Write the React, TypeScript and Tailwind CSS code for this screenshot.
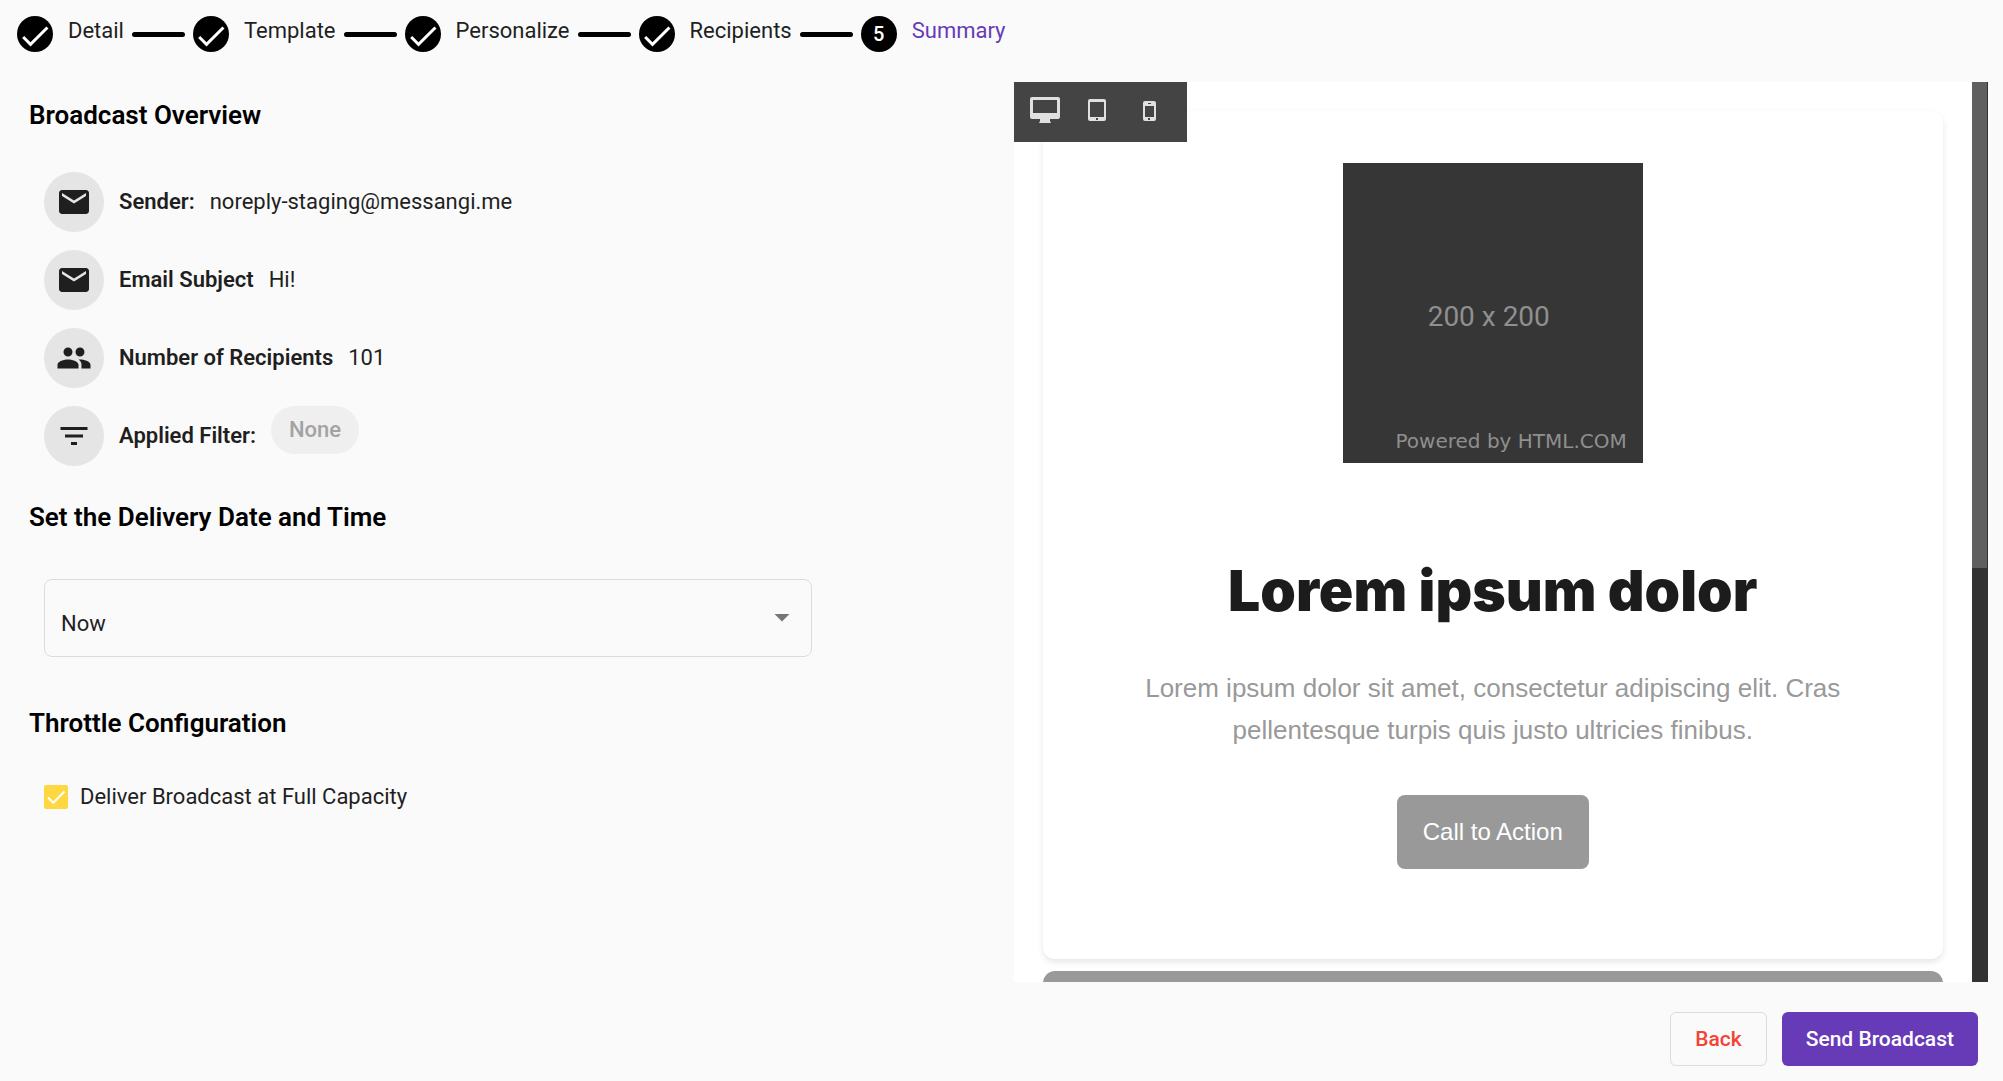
import { MdArrowDropDown, MdCheck, MdEmail, MdFilterList, MdPeople } from "react-icons/md";

const STEPS = ["Detail", "Template", "Personalize", "Recipients", "Summary"];
const CURRENT = 4;

const OVERVIEW = [
  { icon: MdEmail, label: "Sender:", value: "noreply-staging@messangi.me" },
  { icon: MdEmail, label: "Email Subject", value: "Hi!" },
  { icon: MdPeople, label: "Number of Recipients", value: "101" },
  { icon: MdFilterList, label: "Applied Filter:", chip: "None" },
];

function Stepper() {
  return (
    <ol className="flex items-center px-[17px] pt-4">
      {STEPS.map((step, i) => (
        <li key={step} className="flex items-center">
          <span className="flex size-9 items-center justify-center rounded-full bg-black text-xl font-medium text-white">
            {i < CURRENT ? <MdCheck className="mt-1 size-9 shrink-0" /> : i + 1}
          </span>
          <span className={`ml-[15px] pb-1.5 leading-7 ${i === CURRENT ? "text-[#673ab7]" : ""}`}>{step}</span>
          {i < STEPS.length - 1 && <span className="mx-2 h-[5px] w-[53px] rounded-full bg-black" />}
        </li>
      ))}
    </ol>
  );
}

function Overview() {
  return (
    <ul className="mt-[41px] flex flex-col gap-[18px] pl-[15px]">
      {OVERVIEW.map(({ icon: Icon, label, value, chip }) => (
        <li key={label} className="flex items-center gap-[15px]">
          <span className="flex size-[60px] items-center justify-center rounded-full bg-[#e5e5e5]">
            <Icon className="size-9" />
          </span>
          <span className="font-semibold">{label}</span>
          {value && <span>{value}</span>}
          {chip && (
            <span className="flex h-12 items-center self-start rounded-full bg-[#efefef] px-[18px] font-medium text-[#a3a3a3]">
              {chip}
            </span>
          )}
        </li>
      ))}
    </ul>
  );
}

function DeviceBar() {
  return (
    <div className="absolute top-0 left-0 flex h-[60px] w-[173px] bg-[#444] pl-4 text-[#e0e0e0]">
      <button aria-label="Desktop" className="flex w-[58px] items-start pt-[15px]">
        <svg viewBox="0 0 30 26" className="h-[26px] w-[30px]" fill="currentColor">
          <path fillRule="evenodd" d="M2 0h26a2 2 0 0 1 2 2v18a2 2 0 0 1-2 2h-8v2l1 2H9l1-2v-2H2a2 2 0 0 1-2-2V2a2 2 0 0 1 2-2zm1 3v13h24V3z" />
        </svg>
      </button>
      <button aria-label="Tablet" className="flex w-[55px] items-start pt-[17px]">
        <svg viewBox="0 0 18 22" className="h-[22px] w-[18px]" fill="currentColor">
          <path fillRule="evenodd" d="M2 0h14a2 2 0 0 1 2 2v18a2 2 0 0 1-2 2H2a2 2 0 0 1-2-2V2a2 2 0 0 1 2-2zm0 3v15h14V3zm6 16v2h2v-2z" />
        </svg>
      </button>
      <button aria-label="Phone" className="flex items-start pt-[19px]">
        <svg viewBox="0 0 13 20" className="h-5 w-[13px]" fill="currentColor">
          <path fillRule="evenodd" d="M2 0h9a2 2 0 0 1 2 2v16a2 2 0 0 1-2 2H2a2 2 0 0 1-2-2V2a2 2 0 0 1 2-2zm0 5v11h9V5zm3 12v2h2v-2zM5 2v1h3V2z" />
        </svg>
      </button>
    </div>
  );
}

function Preview() {
  return (
    <div className="relative flex overflow-hidden bg-white">
      <div className="flex-1 px-[29px] pt-[29px] font-['Liberation_Sans',Arial,sans-serif]">
        <article className="flex h-[848px] flex-col items-center rounded-xl pt-[52px] shadow-[0_3px_6px_rgba(0,0,0,0.1)]">
          <div className="relative flex size-[300px] items-center justify-center bg-[#363636] pt-2 pr-2 text-[#8f8f8f]">
            <span className="font-['Roboto',sans-serif] text-[28px]">200 x 200</span>
            <span className="absolute right-4 bottom-2 font-['DejaVu_Sans',sans-serif] text-xl leading-7 whitespace-nowrap">
              Powered by HTML.COM
            </span>
          </div>
          <h2 className="mt-[93px] font-['Inter',sans-serif] text-[57px] leading-[70px] font-black text-[#1c1c1c]">
            Lorem ipsum dolor
          </h2>
          <p className="mt-[41px] max-w-[740px] text-center text-[26px] leading-[42px] text-[#999]">
            Lorem ipsum dolor sit amet, consectetur adipiscing elit. Cras pellentesque turpis quis justo ultricies finibus.
          </p>
          <a href="#" className="mt-[44px] rounded-lg bg-[#999] px-[26px] py-[19px] text-2xl leading-9 text-white">
            Call to Action
          </a>
        </article>
        <div className="mt-3 h-40 rounded-xl bg-[#999]" />
      </div>
      <div className="w-4 bg-[#333]">
        <div className="mr-px h-[54%] bg-[#5f5f5f]" />
      </div>
      <DeviceBar />
    </div>
  );
}

export default function App() {
  return (
    <div className="flex h-screen min-h-[900px] flex-col bg-[#fafafa] font-['Roboto',sans-serif] text-[22px] leading-8 text-[#1f1f1f]">
      <Stepper />

      <main className="mt-[30px] grid min-h-0 flex-1 grid-cols-2 grid-rows-1">
        <div className="pt-[17px] pr-3 pl-[29px]">
          <h2 className="text-[26px] leading-8 font-semibold text-black">Broadcast Overview</h2>
          <Overview />

          <h2 id="delivery" className="mt-[35px] text-[26px] leading-8 font-semibold text-black">
            Set the Delivery Date and Time
          </h2>
          <div className="relative mt-[46px] ml-[15px] w-4/5">
            <select
              aria-labelledby="delivery"
              className="h-[78px] w-full appearance-none rounded-lg border border-[#dcdcdc] bg-transparent px-4 pt-3"
            >
              <option>Now</option>
            </select>
            <MdArrowDropDown className="pointer-events-none absolute top-5 right-3 size-9 text-[#757575]" />
          </div>

          <h2 className="mt-[50px] text-[26px] leading-8 font-semibold text-black">Throttle Configuration</h2>
          <label className="mt-[42px] ml-[15px] flex items-center gap-3">
            <span className="relative flex">
              <input type="checkbox" defaultChecked className="peer size-6 appearance-none rounded-xs bg-[#ffd740]" />
              <svg viewBox="0 0 24 24" className="pointer-events-none absolute inset-0 hidden fill-none stroke-white stroke-2 peer-checked:block">
                <path d="M4 12.5l5.3 5.3L20.5 6.5" />
              </svg>
            </span>
            Deliver Broadcast at Full Capacity
          </label>
        </div>

        <div className="grid grid-rows-1 pr-[15px] pl-3">
          <Preview />
        </div>
      </main>

      <footer className="flex justify-end gap-[15px] px-[25px] pt-[30px] pb-[15px] text-[21px] font-medium">
        <button className="h-[54px] rounded-md border border-[#dcdcdc] px-6 text-[#f44336]">Back</button>
        <button className="h-[54px] rounded-md bg-[#673ab7] px-6 text-white">Send Broadcast</button>
      </footer>
    </div>
  );
}
